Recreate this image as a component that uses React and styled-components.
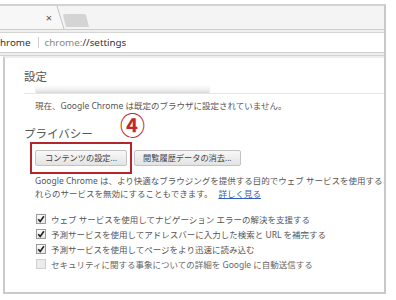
import React from "react";
import styled, { createGlobalStyle } from "styled-components";

const Global = createGlobalStyle`
  html, body { margin: 0; padding: 0; background: #fff; }
  body {
    width: 396px;
    height: 300px;
    overflow: hidden;
    font-family: "Noto Sans", "Noto Sans CJK JP", sans-serif;
  }
`;

const Window = styled.div`
  margin-top: 4px;
  width: 384px;
  height: 288px;
  border-top: 2px solid #d2d2d2;
  border-right: 2px solid #c8c8c8;
  display: flex;
  flex-direction: column;
  overflow: hidden;
`;

const TabStrip = styled.div`
  height: 23px;
  background: #f4f4f4;
  display: flex;
  align-items: flex-end;
  border-bottom: 1px solid #cdcdcd;
`;

const ActiveTab = styled.div`
  width: 56px;
  height: 23px;
  display: flex;
  align-items: center;
  justify-content: flex-end;
  padding-right: 4px;
  box-sizing: border-box;
  font-size: 11px;
  color: #555;
  background: #f7f7f7;
`;

const TabShapes = styled.svg`
  display: block;
`;

const ToolbarGap = styled.div`
  height: 2px;
  background: #efefef;
  border-bottom: 1px solid #d4d4d4;
`;

const AddressBar = styled.div`
  height: 19px;
  display: flex;
  align-items: center;
  font-size: 9.8px;
  color: #333;
  white-space: nowrap;
  border-bottom: 1px solid #d0d0d0;
`;

const Scheme = styled.span`
  color: #888;
`;

const Divider = styled.span`
  width: 1px;
  height: 11px;
  background: #cfcfcf;
  margin: 0 6px 0 7px;
`;

const Content = styled.div`
  flex: 1;
  margin-left: 3px;
  border-top: 2px solid #ececec;
  border-left: 2px solid #cacaca;
  border-bottom: 2px solid #cacaca;
  padding: 12px 0 0 19px;
  overflow: hidden;
  color: #555;
`;

const Heading = styled.div`
  position: relative;
  font-size: 11.5px;
  line-height: 14px;
  color: #555;
  margin-top: ${p => p.$top || 0}px;
`;

const HeaderFoot = styled.div`
  margin-top: 1px;
  padding-left: 11px;
  border-bottom: 1px solid #e6e6e6;
`;

const GhostButton = styled.div`
  width: 175px;
  height: 8px;
  background: linear-gradient(#ffffff, #ececec 70%, #d6d6d6);
  border-radius: 0 0 2px 2px;
`;

const Section = styled.div`
  padding-left: 11px;
  font-size: 8.5px;
  color: #555;
  white-space: nowrap;
`;

const Line = styled.div`
  line-height: ${p => p.$lh || 13}px;
`;

const ButtonRow = styled.div`
  display: flex;
  align-items: center;
  margin-top: 1px;
`;

const Callout = styled.div`
  border: 2px solid #b3262b;
  padding: 6px 3px;
  margin-left: -5px;
  margin-right: 2px;
`;

const Button = styled.div`
  height: 14px;
  line-height: 14px;
  padding: 0 ${p => p.$pad || 9}px;
  border: 1px solid #c3c3c3;
  border-radius: 2px;
  background: linear-gradient(#f8f8f8, #e3e3e3);
  font-size: 8.2px;
  color: #444;
  white-space: nowrap;
`;

const Link = styled.a`
  color: #2f5fb8;
  text-decoration: underline;
  margin-left: 6px;
`;

const Checks = styled.div`
  margin-top: 11px;
`;

const CheckRow = styled.div`
  display: flex;
  align-items: center;
  height: 15px;
  padding-left: 1px;
  color: ${p => (p.$on ? "#555" : "#666")};
`;

const Box = styled.span`
  width: 8px;
  height: 8px;
  border: 1px solid ${p => (p.$on ? "#9a9a9a" : "#cfcfcf")};
  background: ${p => (p.$on ? "linear-gradient(#fafafa, #e6e6e6)" : "#ececec")};
  margin-right: 5px;
  display: flex;
  align-items: center;
  justify-content: center;
`;

const Badge = styled.span`
  position: absolute;
  left: 96px;
  top: -15px;
  font-family: "Noto Sans CJK JP", sans-serif;
  font-size: 25px;
  font-weight: 700;
  line-height: 1;
  color: #c0272d;
`;

const Check = () => (
  <svg width="8" height="8" viewBox="0 0 8 8">
    <path d="M1.2 4.2 L3.2 6.4 L6.9 1.2" fill="none" stroke="#222" strokeWidth="1.6" />
  </svg>
);

const options = [
  { on: true, text: "ウェブ サービスを使用してナビゲーション エラーの解決を支援する" },
  { on: true, text: "予測サービスを使用してアドレスバーに入力した検索と URL を補完する" },
  { on: true, text: "予測サービスを使用してページをより迅速に読み込む" },
  { on: false, text: "セキュリティに関する事象についての詳細を Google に自動送信する" },
];

export default function App() {
  return (
    <>
      <Global />
      <Window>
        <TabStrip>
          <ActiveTab>×</ActiveTab>
          <TabShapes width="40" height="23" viewBox="0 0 40 23">
            <path d="M0 0 L1 0 L8 23 L0 23 Z" fill="#f7f7f7" />
            <path d="M1 0 L8 23" stroke="#c4c4c4" strokeWidth="1" fill="none" />
            <path d="M7 9 Q8 8 10 8 L28 8 Q29 8 30 9 L33 21 L10 21 Z" fill="#d4d4d4" />
          </TabShapes>
        </TabStrip>
        <ToolbarGap />
        <AddressBar>
          hrome
          <Divider />
          <Scheme>chrome:</Scheme>//settings
        </AddressBar>
        <ToolbarGap />
        <Content>
          <Heading>設定</Heading>
          <HeaderFoot>
            <GhostButton />
          </HeaderFoot>
          <Section>
            <Line $lh={12} style={{ marginTop: 6 }}>
              現在、Google Chrome は既定のブラウザに設定されていません。
            </Line>
          </Section>
          <Heading $top={15}>
            プライバシー
            <Badge>④</Badge>
          </Heading>
          <Section>
            <ButtonRow>
              <Callout>
                <Button $pad={9}>コンテンツの設定...</Button>
              </Callout>
              <Button $pad={8}>閲覧履歴データの消去...</Button>
            </ButtonRow>
            <Line>
              Google Chrome は、より快適なブラウジングを提供する目的でウェブ サービスを使用することがあります。必要に応じて、こ
            </Line>
            <Line>
              れらのサービスを無効にすることもできます。
              <Link>詳しく見る</Link>
            </Line>
            <Checks>
              {options.map(o => (
                <CheckRow key={o.text} $on={o.on}>
                  <Box $on={o.on}>{o.on && <Check />}</Box>
                  {o.text}
                </CheckRow>
              ))}
            </Checks>
          </Section>
        </Content>
      </Window>
    </>
  );
}
